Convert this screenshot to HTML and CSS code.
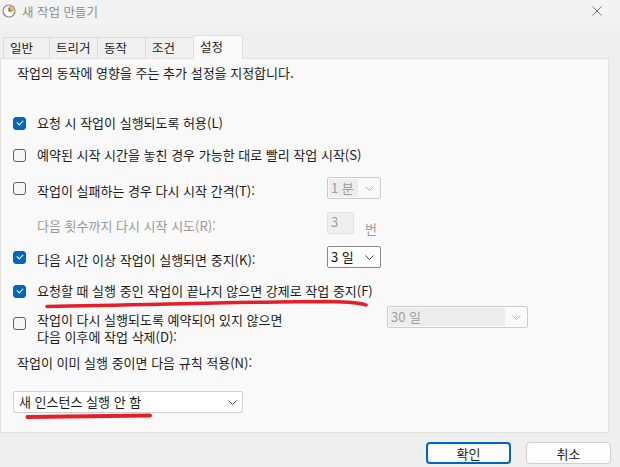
FILE: index.html
```html
<!DOCTYPE html>
<html lang="ko">
<head>
	<meta charset="UTF-8">
	<title>새 작업 만들기</title>
	<link rel="stylesheet" href="styles.css">
</head>
<body>
	<div class="window">
		<div class="titlebar">
			<svg class="appicon" width="14" height="14" viewBox="0 0 14 14">
				<circle cx="7" cy="7" r="6" fill="#fdfdfd" stroke="#8c8c8c" stroke-width="1.2"/>
				<path d="M7 7 L7 1.6 A5.4 5.4 0 0 1 12.4 7 Z" fill="#f2b84b"/>
				<path d="M7 3.5 L7 7 L9.8 7" fill="none" stroke="#555" stroke-width="1.1"/>
			</svg>
			<span class="title">새 작업 만들기</span>
			<svg class="close" width="10" height="10" viewBox="0 0 10 10">
				<path d="M0.5 0.5 L9.5 9.5 M9.5 0.5 L0.5 9.5" stroke="#7a7a7a" stroke-width="1"/>
			</svg>
		</div>

		<div class="tabs">
			<div class="tab t1">일반</div>
			<div class="tab t2">트리거</div>
			<div class="tab t3">동작</div>
			<div class="tab t4">조건</div>
			<div class="tab active">설정</div>
		</div>

		<div class="panel">
			<p class="desc">작업의 동작에 영향을 주는 추가 설정을 지정합니다.</p>

			<div class="opt r1">
				<span class="cb on"></span>
				<span class="lbl">요청 시 작업이 실행되도록 허용(L)</span>
			</div>
			<div class="opt r2">
				<span class="cb"></span>
				<span class="lbl">예약된 시작 시간을 놓친 경우 가능한 대로 빨리 작업 시작(S)</span>
			</div>
			<div class="opt r3">
				<span class="cb"></span>
				<span class="lbl wide">작업이 실패하는 경우 다시 시작 간격(T):</span>
				<div class="combo off small"><span class="val">1 분</span><svg class="chev" width="9" height="5" viewBox="0 0 9 5"><path d="M0.5 0.5 L4.5 4.5 L8.5 0.5" fill="none" stroke="#b4b4b4"/></svg></div>
			</div>
			<div class="opt r4">
				<span class="lbl wide dim">다음 횟수까지 다시 시작 시도(R):</span>
				<div class="spin">3</div>
				<span class="unit">번</span>
			</div>
			<div class="opt r5">
				<span class="cb on"></span>
				<span class="lbl wide">다음 시간 이상 작업이 실행되면 중지(K):</span>
				<div class="combo small"><span class="val">3 일</span><svg class="chev" width="9" height="5" viewBox="0 0 9 5"><path d="M0.5 0.5 L4.5 4.5 L8.5 0.5" fill="none" stroke="#444"/></svg></div>
			</div>
			<div class="opt r6">
				<span class="cb on"></span>
				<span class="lbl">요청할 때 실행 중인 작업이 끝나지 않으면 강제로 작업 중지(F)</span>
			</div>
			<div class="opt r7">
				<span class="cb"></span>
				<span class="lbl two">작업이 다시 실행되도록 예약되어 있지 않으면<br>다음 이후에 작업 삭제(D):</span>
				<div class="combo off big"><span class="val">30 일</span><svg class="chev" width="9" height="5" viewBox="0 0 9 5"><path d="M0.5 0.5 L4.5 4.5 L8.5 0.5" fill="none" stroke="#b4b4b4"/></svg></div>
			</div>

			<p class="rule">작업이 이미 실행 중이면 다음 규칙 적용(N):</p>
			<div class="combo policy"><span class="val">새 인스턴스 실행 안 함</span><svg class="chev" width="9" height="5" viewBox="0 0 9 5"><path d="M0.5 0.5 L4.5 4.5 L8.5 0.5" fill="none" stroke="#444"/></svg></div>
		</div>

		<div class="buttons">
			<button class="btn primary">확인</button>
			<button class="btn">취소</button>
		</div>

		<!-- 빨간 밑줄 표시 -->
		<svg class="marks" width="620" height="467" viewBox="0 0 620 467">
			<path d="M47 306.5 C 150 305, 250 301.5, 330 301.5 C 350 302, 361 303, 366 305" fill="none" stroke="#e3202a" stroke-width="3.5" stroke-linecap="round"/>
			<path d="M27.5 417 L150 415.5" fill="none" stroke="#e3202a" stroke-width="4" stroke-linecap="round"/>
		</svg>
	</div>
</body>
</html>
```

FILE: styles.css
```css
*{
	padding: 0;
	margin: 0;
	box-sizing: border-box;
}
body{
	background: #efefef;
	font-family: "Noto Sans CJK KR", "Noto Sans", sans-serif;
	font-size: 13px;
	color: #1b1b1b;
}
.window{
	position: relative;
	width: 620px;
	height: 467px;
	overflow: hidden;
}
.titlebar{
	height: 25px;
	background: #f3f3f3;
	display: flex;
	align-items: center;
	padding-left: 2px;
}
.appicon{
	margin-top: -3px;
}
.title{
	margin-left: 6px;
	margin-top: -3px;
	color: #8d8d8d;
	font-size: 12.5px;
}
.close{
	margin-left: auto;
	margin-right: 18px;
	margin-top: -4px;
}

/* 탭 */
.tabs{
	display: flex;
	align-items: flex-end;
	margin-top: 10px;
	padding-left: 3px;
	height: 23px;
	font-size: 12.5px;
}
.tab{
	height: 21px;
	line-height: 20px;
	padding-left: 6px;
	border: 1px solid #dadada;
	border-bottom: 0;
	border-right: 0;
	background: #f0f0f0;
}
.t1{ width: 46px; }
.t2{ width: 48px; }
.t3{ width: 48px; }
.t4{ width: 48px; }
.tab.active{
	width: 50px;
	height: 24px;
	line-height: 22px;
	margin-bottom: -1px;
	background: #f9f9f9;
	border: 1px solid #e0e0e0;
	border-bottom: 0;
	position: relative;
	z-index: 1;
}

.panel{
	width: 609px;
	height: 375px;
	background: #f9f9f9;
	border: 1px solid #e2e2e2;
	padding-top: 4px;
}
.desc{
	line-height: 20px;
	padding-left: 16px;
}

/* 옵션 행 */
.opt{
	display: flex;
	align-items: center;
	height: 22px;
	padding-left: 12px;
}
.r1{ margin-top: 29px; }
.r2{ margin-top: 10px; }
.r3{ margin-top: 11px; }
.r4{ margin-top: 13px; padding-left: 36px; }
.r5{ margin-top: 12px; }
.r6{ margin-top: 12px; }
.r7{
	margin-top: 4px;
	height: auto;
	align-items: flex-start;
}
.cb{
	width: 13px;
	height: 13px;
	border: 1px solid #616161;
	border-radius: 3px;
	background: #f6f6f6;
	margin-right: 11px;
	flex: none;
	position: relative;
}
.cb.on{
	background: #0067c0;
	border-color: #0067c0;
}
.cb.on::after{
	content: "";
	position: absolute;
	left: 3px;
	top: 2px;
	width: 5px;
	height: 3px;
	border-left: 1px solid #fff;
	border-bottom: 1px solid #fff;
	transform: rotate(-45deg);
}
.lbl{
	line-height: 20px;
	white-space: nowrap;
}
.lbl.wide{
	width: 290px;
	padding-top: 6px;
}
.dim{
	color: #9a9a9a;
}
.r7 .cb{
	margin-top: 11px;
}
.lbl.two{
	width: 350px;
	line-height: 17px;
	margin-top: 5px;
}

/* 콤보 */
.combo{
	height: 22px;
	border: 1px solid #cccccc;
	border-radius: 2px;
	background: #fafafa;
	display: flex;
	align-items: center;
	padding: 0 6px 0 1px;
	flex: none;
}
.combo .val{
	height: 18px;
	line-height: 18px;
	padding-left: 2px;
	flex: 1;
}
.combo.off .val{
	background: #ededed;
	color: #9d9d9d;
	margin-right: 7px;
}
.combo.small{
	width: 54px;
}
.combo.big{
	width: 141px;
}
.r5 .combo{
	background: #ffffff;
	border-color: #8a8a8a;
}
.r5 .combo .val{
	color: #111;
	margin-right: 7px;
}
.spin{
	width: 27px;
	height: 22px;
	border: 1px solid #e2e2e2;
	border-radius: 2px;
	background: #efefef;
	color: #9d9d9d;
	line-height: 18px;
	padding-left: 3px;
}
.unit{
	margin-left: 11px;
	padding-top: 10px;
	color: #9d9d9d;
}
.rule{
	margin-top: 8px;
	padding-left: 16px;
	line-height: 20px;
}
.combo.policy{
	width: 230px;
	margin-top: 18px;
	margin-left: 12px;
	background: #ffffff;
	border-color: #d0d0d0;
	padding-left: 3px;
	padding-right: 5px;
}

/* 버튼 */
.buttons{
	display: flex;
	justify-content: flex-end;
	margin-top: 9px;
	padding-right: 9px;
}
.btn{
	width: 85px;
	height: 22px;
	font-family: inherit;
	font-size: 13px;
	color: #1b1b1b;
	background: #fdfdfd;
	border: 1px solid #d0d0d0;
	border-radius: 4px;
	margin-left: 15px;
}
.btn.primary{
	border: 2px solid #0067c0;
}
.marks{
	position: absolute;
	left: 0;
	top: 0;
	pointer-events: none;
}
```
